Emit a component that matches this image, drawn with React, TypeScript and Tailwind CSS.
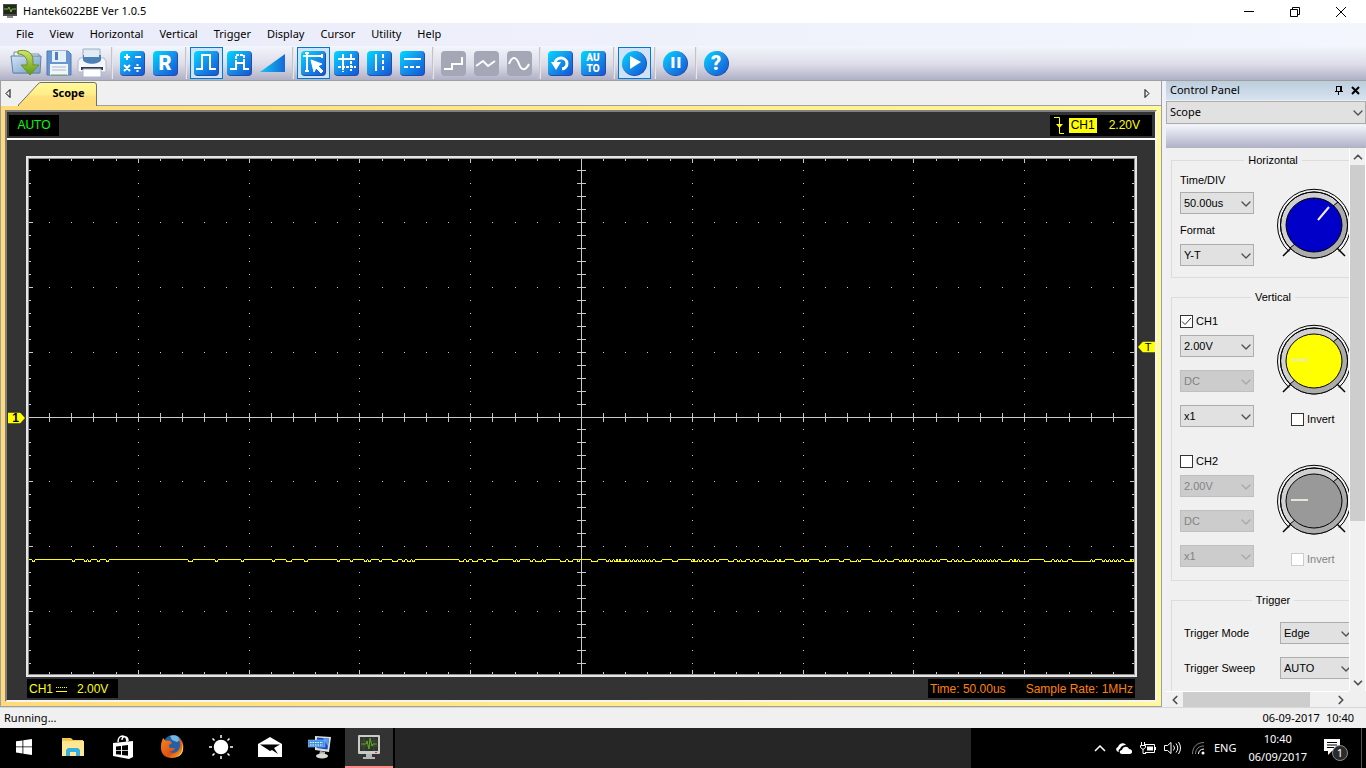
import React from 'react';
import { ChevronDown, ChevronLeft, ChevronRight, ChevronUp } from 'lucide-react';

const menus = ['File', 'View', 'Horizontal', 'Vertical', 'Trigger', 'Display', 'Cursor', 'Utility', 'Help'];

// where the signal drops to the lower sample level: [x, length]
const dips: [number, number][] = [
  [4, 1], [44, 1], [56, 1], [60, 1], [69, 1], [78, 1], [160, 3], [187, 1], [213, 1], [244, 1],
  [258, 4], [276, 2], [309, 1], [322, 1], [336, 1], [340, 1], [351, 1], [364, 4], [374, 1], [379, 2],
  [384, 1], [431, 3], [438, 1], [444, 4], [455, 1], [464, 4], [485, 1], [489, 1], [502, 1], [507, 5],
  [515, 1], [532, 4], [540, 3], [549, 1], [563, 5], [578, 1], [582, 1], [586, 1], [589, 1], [592, 4],
  [598, 1], [602, 1], [606, 1], [610, 1], [614, 1], [618, 1], [622, 1], [627, 5], [644, 4], [663, 1],
  [666, 2], [671, 1], [676, 1], [681, 3], [688, 1], [700, 4], [709, 1], [713, 3], [722, 1], [727, 2],
  [735, 1], [739, 6], [749, 1], [752, 3], [766, 5], [775, 1], [778, 1], [791, 4], [798, 1], [811, 3],
  [822, 5], [830, 1], [844, 5], [852, 3], [859, 5], [871, 1], [875, 1], [878, 1], [882, 2], [889, 1],
  [893, 1], [897, 3], [904, 2], [909, 1], [919, 3], [926, 1], [930, 2], [936, 6], [947, 1], [951, 1],
  [955, 1], [959, 1], [963, 1], [967, 1], [973, 7], [984, 1], [987, 1], [991, 8], [1016, 6], [1026, 1],
  [1030, 1], [1034, 4], [1044, 17], [1064, 1], [1074, 1], [1078, 1], [1082, 1], [1086, 1], [1090, 1],
  [1096, 5], [1103, 1],
];

const trace =
  'M0 400.5' + dips.map(([x, n]) => `L${x - 1.5} 400.5L${x} 402.5L${x + n} 402.5L${x + n + 1.5} 400.5`).join('') + 'L1105 400.5';

function Graticule() {
  const cx = 552;
  const cy = 258;
  const xs: number[] = [];
  const ys: number[] = [];
  for (let i = -24; i <= 24; i++) xs.push(i);
  for (let i = -19; i <= 19; i++) ys.push(i);
  const px = (i: number) => Math.round(cx + i * 22.16);
  const py = (i: number) => Math.floor(cy + i * 12.95);

  return (
    <svg viewBox="0 0 1105 515" preserveAspectRatio="none" className="block size-full" shapeRendering="crispEdges">
      <g fill="#c8c8c8">
        <rect x={cx} y="0" width="1" height="515" />
        <rect x="0" y={cy} width="1105" height="1" />
        {xs.map((i) => (
          <React.Fragment key={i}>
            <rect x={px(i)} y={cy - 4} width="1" height="9" />
            <rect x={px(i)} y="0" width="1" height={i % 5 ? 2 : 4} />
            <rect x={px(i)} y={i % 5 ? 513 : 511} width="1" height="4" />
          </React.Fragment>
        ))}
        {ys.map((i) => (
          <React.Fragment key={i}>
            <rect x={cx - 4} y={py(i)} width="9" height="1" />
            <rect x="0" y={py(i)} width={i % 5 ? 2 : 4} height="1" />
            <rect x={i % 5 ? 1103 : 1101} y={py(i)} width="4" height="1" />
          </React.Fragment>
        ))}
        {[-15, -10, -5, 5, 10, 15].map((r) => xs.map((i) => <rect key={`${r}:${i}`} x={px(i)} y={py(r)} width="1" height="1" />))}
        {[-20, -15, -10, -5, 5, 10, 15, 20].map((c) => ys.map((i) => <rect key={`${c}:${i}`} x={px(c)} y={py(i)} width="1" height="1" />))}
      </g>
      <path d={trace} fill="none" stroke="#ffff00" />
    </svg>
  );
}

function ToolButton({ label, active, children }: { label: string; active?: boolean; children: React.ReactNode }) {
  return (
    <button
      aria-label={label}
      className={`flex h-8 w-[33px] shrink-0 items-center justify-center border ${active ? 'border-[#0078d7] bg-[#cfe3f6]' : 'border-transparent'}`}
    >
      {children}
    </button>
  );
}

function Tile({ children, off, round }: { children: React.ReactNode; off?: boolean; round?: boolean }) {
  return (
    <span
      className={`flex size-[25px] items-center justify-center text-white ${round ? 'rounded-full' : 'rounded'} ${
        off ? 'bg-[#a3a7b6]' : 'border-r border-b border-[#2d4a9e] bg-linear-to-br from-[#00dcff] via-[#1690ea] to-[#1456d8]'
      }`}
    >
      {children}
    </span>
  );
}

function Glyph({ d, width = 2, dash, gaps = '4 2' }: { d: string; width?: number; dash?: string; gaps?: string }) {
  return (
    <svg viewBox="0 0 25 25" className="size-[25px] shrink-0" fill="none" stroke="currentColor" strokeWidth={width}>
      <path d={d} />
      {dash && <path d={dash} strokeDasharray={gaps} />}
    </svg>
  );
}

function Separator() {
  return <span className="mx-[3px] h-8 w-0.5 shrink-0 border-r border-white/60 bg-[#c4c4c8]" />;
}

function Toolbar() {
  return (
    <div className="flex h-[34px] shrink-0 items-center bg-linear-to-b from-[#f3f6fc] via-[#dcdce8] via-55% to-[#b0b0c6] pl-[9px]">
      <ToolButton label="Open">
        <svg viewBox="0 0 32 28" className="h-7 w-8 shrink-0">
          <defs>
            <linearGradient id="folder" x1="0" y1="0" x2="1" y2="1">
              <stop offset="0" stopColor="#d5e4f5" />
              <stop offset="1" stopColor="#6f9ccb" />
            </linearGradient>
            <linearGradient id="arrow" x1="0" y1="0" x2="0" y2="1">
              <stop offset="0" stopColor="#d3e66a" />
              <stop offset="1" stopColor="#5f9a10" />
            </linearGradient>
          </defs>
          <path d="M4 3h9l2 2h14v19H4z" fill="#e8eef2" stroke="#7f949f" />
          <path d="M1 7h30l-1 17H3z" fill="url(#folder)" stroke="#5d83a8" />
          <path d="M8 2c8-2 14 1 15 8v6h6l-9 10-9-10h6c1-7-3-11-9-11z" fill="url(#arrow)" stroke="#6f8d2a" />
        </svg>
      </ToolButton>
      <ToolButton label="Save">
        <svg viewBox="0 0 26 26" className="size-[26px] shrink-0">
          <path d="M1 1h21l3 3v21H1z" fill="#6796d1" stroke="#5079b5" />
          <path d="M6 1h14v11H6z" fill="#e6f0fa" />
          <path d="M9 2h3v8H9z" fill="#4f7fc0" />
          <path d="M4 14h18v11H4z" fill="#f2f6fa" />
          <path d="M6 17h14M6 20h14" stroke="#a9b8c9" />
          <path d="M5 25h16" stroke="#75a552" />
        </svg>
      </ToolButton>
      <ToolButton label="Print">
        <svg viewBox="0 0 30 30" className="size-[30px] shrink-0">
          <path d="M6 1h17v10H6z" fill="#dde7f2" stroke="#a0b0c5" />
          <path d="M3 10h24l2 3v11H1V13z" fill="#f4f6f9" stroke="#b3bac8" />
          <path d="M6 7h18v5c-2 5-16 5-18 0z" fill="#4e80b8" />
          <path d="M7 3h15v6H7z" fill="#e3ebf4" />
          <path d="M4 19h22v3H4z" fill="#2e3848" />
          <path d="M6 21h18v8H6z" fill="#fff" stroke="#a8b7cc" />
        </svg>
      </ToolButton>
      <Separator />
      <ToolButton label="Math">
        <Tile><Glyph d="M4 7h6M7 4v6M15 7h6M4 15l6 6M10 15l-6 6M14 18h7M17.5 14v2M17.5 20v2" /></Tile>
      </ToolButton>
      <ToolButton label="Reference">
        <Tile><span className="font-[Roboto] text-xl leading-6 font-black">R</span></Tile>
      </ToolButton>
      <Separator />
      <ToolButton label="Square wave" active>
        <Tile><Glyph d="M2 19h6V5h8v14h6" /></Tile>
      </ToolButton>
      <ToolButton label="Burst">
        <Tile><Glyph d="M3 19h6v-6h8v6h5" dash="M9 13V5h8v8" gaps="3 1" /></Tile>
      </ToolButton>
      <ToolButton label="Ramp">
        <svg viewBox="0 0 26 20" className="w-[26px] shrink-0">
          <defs>
            <linearGradient id="ramp">
              <stop offset="0" stopColor="#12c8f4" />
              <stop offset="1" stopColor="#1668d8" />
            </linearGradient>
          </defs>
          <path d="M0 19 25 1v18z" fill="url(#ramp)" />
        </svg>
      </ToolButton>
      <Separator />
      <ToolButton label="Cursor" active>
        <Tile>
          <svg viewBox="0 0 25 25" className="size-[25px] shrink-0" fill="none" stroke="#fff" strokeWidth="2">
            <path d="M6 2v20M2 6h20M4 3h4M4 21h4M21 4v4" />
            <path d="M10 10l11 4-4 2 5 5-2 2-5-5-2 4z" fill="#fff" strokeWidth="1" />
          </svg>
        </Tile>
      </ToolButton>
      <ToolButton label="Cross cursor">
        <Tile><Glyph d="M9 4v13M4 9h17M17 4v6" dash="M17 11v10M4 17h18M9 17v5" gaps="3 1" /></Tile>
      </ToolButton>
      <ToolButton label="Vertical cursor">
        <Tile><Glyph d="M9 4v17" dash="M16 4v17" /></Tile>
      </ToolButton>
      <ToolButton label="Horizontal cursor">
        <Tile><Glyph d="M4 9h17" dash="M4 17h18" /></Tile>
      </ToolButton>
      <Separator />
      <ToolButton label="Step">
        <Tile off><Glyph d="M3 18h8v-5h10V6" /></Tile>
      </ToolButton>
      <ToolButton label="Linear">
        <Tile off><Glyph d="M2 15l7-5 5 5 7-5" /></Tile>
      </ToolButton>
      <ToolButton label="Sine">
        <Tile off><Glyph d="M2 13c3-8 7-8 10 0s7 6 10 0" /></Tile>
      </ToolButton>
      <Separator />
      <ToolButton label="Reset">
        <Tile>
          <svg viewBox="0 0 25 25" className="size-[25px] shrink-0">
            <path d="M7 13a6 5.500 0 1 1 7 6" fill="none" stroke="#fff" strokeWidth="3" />
            <path d="M3 12h10l-5 8z" fill="#fff" />
          </svg>
        </Tile>
      </ToolButton>
      <ToolButton label="Auto set">
        <Tile>
          <span className="flex flex-col font-[Roboto] text-[10px] leading-[11px] font-black">
            <span>AU</span>
            <span>TO</span>
          </span>
        </Tile>
      </ToolButton>
      <Separator />
      <ToolButton label="Start" active>
        <Tile round>
          <svg viewBox="0 0 25 25" className="size-[25px] shrink-0" fill="#fff"><path d="M8 6l11 6-11 7z" /></svg>
        </Tile>
      </ToolButton>
      <Separator />
      <ToolButton label="Pause">
        <Tile round><Glyph d="M10 7v11M16 7v11" width={3} /></Tile>
      </ToolButton>
      <Separator />
      <ToolButton label="Help">
        <Tile round><span className="font-[Roboto] text-xl leading-6 font-black">?</span></Tile>
      </ToolButton>
    </div>
  );
}

function Dropdown({ id, label, value, disabled }: { id: string; label?: string; value: string; disabled?: boolean }) {
  return (
    <div className="relative h-[22px] w-[74px] shrink-0">
      <select
        id={id}
        aria-label={label}
        disabled={disabled}
        defaultValue={value}
        className="size-full appearance-none border border-[#adadad] bg-[#e1e1e1] pl-[3px] text-[11px] text-black opacity-100 disabled:border-[#bfbfbf] disabled:bg-[#cccccc] disabled:text-[#838383]"
      >
        <option>{value}</option>
      </select>
      <ChevronDown className={`pointer-events-none absolute top-1 right-0 size-4 ${disabled ? 'text-[#a8a8a8]' : 'text-[#505050]'}`} strokeWidth={2} />
    </div>
  );
}

function Check({ label, checked, disabled }: { label: string; checked?: boolean; disabled?: boolean }) {
  return (
    <label className={`relative flex h-3.5 items-center gap-[3px] ${disabled ? 'text-[#838383]' : ''}`}>
      <input
        type="checkbox"
        defaultChecked={checked}
        disabled={disabled}
        className="peer size-[13px] appearance-none border border-[#333] bg-white disabled:border-[#ccc]"
      />
      <svg viewBox="0 0 13 13" className="pointer-events-none invisible absolute left-0 size-[13px] peer-checked:visible" fill="none" stroke="#333">
        <path d="M2 6.500l3 3 6-6.500" />
      </svg>
      {label}
    </label>
  );
}

function Knob({ fill, pointer, stroke = '#e6e6d2' }: { fill: string; pointer: string; stroke?: string }) {
  return (
    <svg viewBox="0 0 74 74" className="size-[74px] shrink-0" fill="none" stroke="#000">
      <path d="M12 63.500A36.500 36 0 1 1 62 63.500" fill="#f0f0f0" />
      <ellipse cx="37" cy="37" rx="33.500" ry="33" fill="#d0d0d0" />
      <path d="M60.500 13.500A33 33 0 0 1 13.500 60.500z" fill="#acacac" stroke="none" />
      <ellipse cx="37" cy="37" rx="33.500" ry="33" />
      <ellipse cx="37" cy="37" rx="28" ry="27" fill={fill} />
      <path d="M61 14l-5 4M18 56l-5 4" />
      <path d="M14 60l-8 8M60 60l8 8" strokeWidth="1.5" />
      <path d={pointer} stroke={stroke} strokeWidth="2" />
    </svg>
  );
}

function Channel({ name, on, fill }: { name: string; on?: boolean; fill: string }) {
  return (
    <div className="flex gap-[23px] pl-2">
      <div className="flex w-[74px] flex-col gap-[13px]">
        <div className="flex flex-col gap-[7px]">
          <Check label={name} checked={on} />
          <Dropdown id={`${name}-volt`} label={`${name} volts`} value="2.00V" disabled={!on} />
        </div>
        <Dropdown id={`${name}-coupling`} label={`${name} coupling`} value="DC" disabled />
        <Dropdown id={`${name}-probe`} label={`${name} probe`} value="x1" disabled={!on} />
      </div>
      <div className="pt-2.5">
        <Knob fill={fill} pointer="M14 36h17" />
        <div className="mt-3.5 pl-3.5">
          <Check label="Invert" disabled={!on} />
        </div>
      </div>
    </div>
  );
}

function Group({ title, children }: { title: string; children: React.ReactNode }) {
  return (
    <fieldset className="w-[204px] shrink-0 border border-[#dcdcdc]">
      <legend className="mx-auto px-1 leading-3.5">{title}</legend>
      {children}
    </fieldset>
  );
}

function ControlPanel() {
  return (
    <aside className="flex w-[200px] shrink-0 flex-col">
      <div className="flex h-[19px] shrink-0 items-center bg-linear-to-b from-[#bccddc] to-[#d6e2f0] pl-1">
        <h2 className="flex-1">Control Panel</h2>
        <button aria-label="Pin" className="mr-2">
          <svg viewBox="0 0 9 9" className="size-[9px]" fill="none" stroke="#000" shapeRendering="crispEdges">
            <path d="M2.500 0v5M2 .5h5M6 0v5M7 0v5M.5 5.500h8M4.500 5v4" />
          </svg>
        </button>
        <button aria-label="Close panel" className="mr-1.5">
          <svg viewBox="0 0 9 9" className="size-[9px]" fill="none" stroke="#000" strokeWidth="2"><path d="M1 1l7 7M8 1l-7 7" /></svg>
        </button>
      </div>
      <div className="relative mt-px h-6 shrink-0">
        <select aria-label="Panel" className="h-[23px] w-full appearance-none border border-[#adadad] bg-[#e1e1e1] pl-[3px] text-[11px] text-black">
          <option>Scope</option>
        </select>
        <ChevronDown className="pointer-events-none absolute top-1 right-0 size-4 text-[#505050]" />
      </div>
      <div className="h-[23px] shrink-0 bg-linear-to-b from-[#f3f6fc] to-[#b0b0c6]" />
      <div className="flex min-h-0 flex-1">
        <div className="flex min-w-0 flex-1 flex-col">
          <div className="flex min-h-0 flex-1 flex-col gap-3 overflow-hidden pt-[5px] pl-[5px] font-['Liberation_Sans',Arial,sans-serif] text-[11px]">
            <Group title="Horizontal">
              <div className="flex gap-[23px] pb-[11px] pl-2">
                <div className="w-[74px] pt-[5px]">
                  <label htmlFor="timediv" className="mb-1 block leading-4">Time/DIV</label>
                  <Dropdown id="timediv" value="50.00us" />
                  <label htmlFor="format" className="mt-2 mb-1.5 block leading-4">Format</label>
                  <Dropdown id="format" value="Y-T" />
                </div>
                <div className="pt-[21px]">
                  <Knob fill="#0000c8" pointer="M41 32l11-13" stroke="#f0f0f0" />
                </div>
              </div>
            </Group>
            <Group title="Vertical">
              <div className="flex flex-col gap-[27px] pt-2.5 pb-[13px]">
                <Channel name="CH1" on fill="#ffff00" />
                <Channel name="CH2" fill="#999999" />
              </div>
            </Group>
            <Group title="Trigger">
              <div className="flex flex-col gap-[13px] pt-[15px] pb-6 pl-3">
                <div className="flex items-center">
                  <label htmlFor="mode" className="w-24 shrink-0">Trigger Mode</label>
                  <Dropdown id="mode" value="Edge" />
                </div>
                <div className="flex items-center">
                  <label htmlFor="sweep" className="w-24 shrink-0">Trigger Sweep</label>
                  <Dropdown id="sweep" value="AUTO" />
                </div>
              </div>
            </Group>
          </div>
          <div className="flex h-4 shrink-0 items-stretch border-t border-white text-[#505050]">
            <button aria-label="Scroll left" className="w-[17px]"><ChevronLeft className="mx-auto size-3.5" strokeWidth={3} /></button>
            <div className="flex-1"><div className="h-full w-[85%] bg-[#cdcdcd]" /></div>
            <button aria-label="Scroll right" className="w-[17px]"><ChevronRight className="mx-auto size-3.5" strokeWidth={3} /></button>
          </div>
        </div>
        <div className="mb-4 flex w-[17px] shrink-0 flex-col border-x border-white text-[#505050]">
          <button aria-label="Scroll up" className="h-[17px]"><ChevronUp className="mx-auto size-3.5" strokeWidth={3} /></button>
          <div className="flex-1"><div className="h-[70%] bg-[#cdcdcd]" /></div>
          <button aria-label="Scroll down" className="h-[17px]"><ChevronDown className="mx-auto size-3.5" strokeWidth={3} /></button>
        </div>
      </div>
    </aside>
  );
}

// flag with the channel or trigger letter, placed by its level on the screen
function LevelMarker({ level, text, left }: { level: number; text: string; left?: boolean }) {
  return (
    <div className="relative">
      <div className="absolute inset-x-0 flex h-[11px] -translate-y-1/2 items-center justify-center" style={{ top: `${level}%` }}>
        <svg viewBox="0 0 17 11" className="absolute h-[11px] w-[17px]" fill="#ffff00">
          <path d={left ? 'M17 0H5L0 5.500 5 11h12z' : 'M0 0h12l5 5.500L12 11H0z'} />
        </svg>
        <span className={`relative leading-[11px] text-black ${left ? 'pl-1 text-[11px]' : 'pr-0.5 text-xs font-bold'}`}>{text}</span>
      </div>
    </div>
  );
}

function Scope() {
  return (
    <main className="flex min-w-0 flex-1 flex-col border-x border-[#a0a0a0]">
      <div className="flex h-[25px] shrink-0 items-stretch bg-[#f0f0f0]">
        <button aria-label="Previous tab" className="w-[17px] pr-1">
          <svg viewBox="0 0 6 9" className="mx-auto h-[9px] w-1.5" fill="none" stroke="#000"><path d="M5 .5v8l-4-4z" /></svg>
        </button>
        <button className="relative h-[25px] w-[79px] font-bold">
          <svg viewBox="0 0 79 25" className="absolute inset-0 size-full">
            <defs>
              <linearGradient id="tab" x1="0" y1="0" x2="0" y2="1">
                <stop offset="0" stopColor="#fffa98" />
                <stop offset=".5" stopColor="#ffee88" />
                <stop offset=".6" stopColor="#ffdf7c" />
                <stop offset="1" stopColor="#ffdb78" />
              </linearGradient>
            </defs>
            <path d="M0 24.500 20 3q1-1.500 3-1.500h53q2.500 0 2.500 2.500v21z" fill="url(#tab)" stroke="#707070" />
            <path d="M1 24.500h77" stroke="#ffdb78" />
          </svg>
          <span className="relative pl-[22px]">Scope</span>
        </button>
        <div className="flex flex-1 items-center justify-end border-b border-[#a0a0a0] pr-[11px]">
          <button aria-label="Next tab">
            <svg viewBox="0 0 6 9" className="h-[9px] w-1.5" fill="none" stroke="#000"><path d="M1 .5v8l4-4z" /></svg>
          </button>
        </div>
      </div>
      <div className="flex min-h-0 flex-1 flex-col border-b border-[#a0a0a0] bg-linear-to-r from-[#ffdb78] to-[#fff99a] p-1">
        <div className="flex min-h-0 flex-1 flex-col border-2 border-t-[#808080] border-r-[#f4f4f4] border-b-[#f4f4f4] border-l-[#808080] bg-[#333] font-['Liberation_Sans',Arial,sans-serif] text-xs">
          <div className="flex h-7 shrink-0 items-center justify-between border-b-2 border-white pr-[3px] pl-0.5">
            <div className="flex h-[21px] w-[50px] items-center justify-center bg-black text-[#00ff00]">AUTO</div>
            <div className="flex h-[21px] items-center bg-black pr-3 pl-1 text-[#ffff00]">
              <svg viewBox="0 0 11 17" className="mr-1 h-[17px] w-[11px]" fill="none" stroke="#ffff00">
                <path d="M0 .5h5.500v16H10" />
                <path d="M2 7h7L5.500 11z" fill="#ffff00" stroke="none" />
              </svg>
              <span className="bg-[#ffff00] px-0.5 leading-[15px] text-black">CH1</span>
              <span className="ml-3">2.20V</span>
            </div>
          </div>
          <div className="grid min-h-0 flex-1 grid-cols-[19px_1fr_18px] pt-4">
            <LevelMarker level={50.2} text="1" />
            <div className="min-h-0 border-2 border-[#e6e6e6] bg-black">
              <div className="size-full border border-[#909090]"><Graticule /></div>
            </div>
            <LevelMarker level={36.6} text="T" left />
          </div>
          <div className="my-0.5 flex h-[19px] shrink-0 items-center justify-between px-5">
            <div className="flex h-full items-center bg-black pr-2.5 pl-0.5 text-[#ffff00]">
              <span>CH1</span>
              <svg viewBox="0 0 11 6" className="mr-2.5 ml-[3px] h-1.5 w-[11px]" stroke="#ffff00" shapeRendering="crispEdges">
                <path d="M0 1.500h11" strokeDasharray="1 1" />
                <path d="M0 5.500h11" />
              </svg>
              <span>2.00V</span>
            </div>
            <div className="flex h-full items-center gap-5 bg-black px-0.5 text-[#ff8000]">
              <span>Time: 50.00us</span>
              <span>Sample Rate: 1MHz</span>
            </div>
          </div>
        </div>
      </div>
    </main>
  );
}

function Monitor({ className }: { className: string }) {
  return (
    <svg viewBox="0 0 22 24" className={className}>
      <rect x="0" y="0" width="22" height="19" rx="1" fill="#c9ccc6" />
      <rect x="2" y="2" width="18" height="14" fill="#30352c" />
      <path d="M2 6h18M2 11h18M6 2v14M16 2v14" stroke="#555d50" strokeWidth=".5" />
      <path d="M3 9h5l1-3 2 8 1-11 2 8 1-2h4" fill="none" stroke="#5fae1e" />
      <path d="M8 19h6v3h3v2H5v-2h3z" fill="#b4b7b1" />
      <path d="M17 17.500h2" stroke="#e03030" />
    </svg>
  );
}

function Task({ label, active, children }: { label: string; active?: boolean; children: React.ReactNode }) {
  return (
    <button
      aria-label={label}
      className={`flex h-10 w-12 shrink-0 items-center justify-center border-b-2 ${active ? 'border-[#ff8a8a] bg-[#333]' : 'border-transparent'}`}
    >
      {children}
    </button>
  );
}

function Taskbar() {
  return (
    <footer className="flex h-10 shrink-0 bg-black text-white">
      <div className="flex w-[393px] shrink-0 justify-between">
        <Task label="Start menu">
          <svg viewBox="0 0 16 16" className="size-4" fill="#fff">
            <path d="M0 2.300 6.500 1.400v6.100H0zM7.300 1.300 16 0v7.500H7.300zM0 8.300h6.500v6.200L0 13.600zM7.300 8.300H16V16l-8.700-1.300z" />
          </svg>
        </Task>
        <Task label="File Explorer">
          <svg viewBox="0 0 22 18" className="h-[18px] w-[22px]">
            <path d="M0 0h9l2 2h10v16H0z" fill="#f5c84b" />
            <path d="M0 3h22v15H0z" fill="#ffe793" />
            <path d="M4 18v-6l2-2h10l2 2v6h-4v-4H8v4z" fill="#35aee2" />
          </svg>
        </Task>
        <Task label="Store">
          <svg viewBox="0 0 22 24" className="h-6 w-[22px]">
            <path d="M6 7c0-8 9-8 9 0M10 5c0-5 6-4 6 1" fill="none" stroke="#fff" strokeWidth="1.500" />
            <path d="M1 8l20-2v16l-4 2-16-3z" fill="#fff" />
            <path d="M4 11.500l5-.6v4H4zM10 10.800l6-.7v4.800h-6zM4 15.800h5v4l-5-.6zM10 15.800h6v4.900l-6-.7z" fill="#000" />
          </svg>
        </Task>
        <Task label="Firefox">
          <svg viewBox="0 0 24 24" className="size-6">
            <defs>
              <linearGradient id="fox" x1="0" y1="0" x2="1" y2="1">
                <stop offset="0" stopColor="#f08a1d" />
                <stop offset=".6" stopColor="#df4f12" />
                <stop offset="1" stopColor="#ffc62e" />
              </linearGradient>
            </defs>
            <circle cx="13" cy="10" r="10" fill="#2460a8" />
            <path d="M10 1c5-2 9 0 10 4l-3 2-5-2z" fill="#6fb8e4" />
            <path d="M2 6l1-3 3 3c3-1 5 0 6 2l-3 2c0 2 0 3 2 3h4c-1 3-4 4-6 3 3 4 11 2 11-6 0-3-1-5-2-7 5 3 6 7 5 12-1 5-6 8-11 8C5 23 1 19 1 13c0-3 0-5 1-7z" fill="url(#fox)" />
            <path d="M20 5c4 6 3 14-4 17 8-1 9-11 4-17z" fill="#ffdc50" />
          </svg>
        </Task>
        <Task label="Brightness">
          <svg viewBox="0 0 24 24" className="size-6" stroke="#fff" strokeWidth="1.500">
            <circle cx="12" cy="12" r="6.500" fill="#fff" />
            <path d="M12 0v3M12 21v3M0 12h3M21 12h3M3.500 3.500l2 2M18.500 18.500l2 2M3.500 20.500l2-2M18.500 5.500l2-2" />
          </svg>
        </Task>
        <Task label="Mail">
          <svg viewBox="0 0 24 20" className="h-5 w-6">
            <path d="M0 7 12 0l12 7v13H0z" fill="#fff" />
            <path d="M2 7.500h20L16 11l4 6-6-4-2 1z" fill="#000" />
          </svg>
        </Task>
        <Task label="Remote keyboard">
          <svg viewBox="0 0 24 24" className="size-6">
            <path d="M7 1l16 1-2 15-14-2z" fill="#e2e2dc" />
            <path d="M9 2.500l12 1-1.500 11L8.500 13z" fill="#1845c8" />
            <path d="M15 3l6 .5-1 8z" fill="#5c9bf0" />
            <path d="M12 16l5 1v3H11z" fill="#b0b0a8" />
            <ellipse cx="14" cy="21" rx="6" ry="2.500" fill="#dadad4" />
            <rect x="0" y="5" width="17" height="7" fill="#3d93e0" stroke="#a8d2f5" strokeWidth=".5" />
            <path d="M2 7.500h13M2 10h13" stroke="#fff" strokeDasharray="1.500 1" />
          </svg>
        </Task>
        <Task label="Hantek6022BE" active>
          <Monitor className="h-6 w-[22px]" />
        </Task>
      </div>
      <div className="ml-0.5 w-[42.2%] bg-[#262626]" />
      <div className="ml-auto flex items-center">
        <button aria-label="Show hidden icons">
          <svg viewBox="0 0 12 7" className="h-[7px] w-3" fill="none" stroke="#fff" strokeWidth="1.500"><path d="M1 6l5-5 5 5" /></svg>
        </button>
        <svg viewBox="0 0 16 11" className="ml-2.5 h-[11px] w-4" fill="#fff">
          <path d="M3 9C0 9-1 5 2 4c1-4 6-5 8-2-3 0-5 1-6 4-1 0-2 2-1 3z" />
          <path d="M6 11c-3 0-3-4 0-4 1-4 6-4 7-1 4 0 4 5 1 5z" />
        </svg>
        <svg viewBox="0 0 16 12" className="ml-2 h-3 w-4" fill="none" stroke="#fff">
          <path d="M5 2.500h9.500v8H5M15.500 5v3M1.500 0v3M4.500 0v3M.5 3.500h5v2l-2 1.500h-1l-2-1.500zM3 7v4.500h3" />
          <path d="M7 4.500h6v4H7z" fill="#fff" stroke="none" />
        </svg>
        <svg viewBox="0 0 17 14" className="ml-2 h-3.5 w-[17px]" fill="none" stroke="#fff">
          <path d="M.5 4.500h3L7 1.500v11L3.500 9.500h-3zM9.500 4.500q2 2.500 0 5M12 2.500q3.500 4.500 0 9M14.500 1q4 6 0 12" />
        </svg>
        <svg viewBox="0 0 14 14" className="ml-2.5 size-3.5" fill="none" stroke="#fff">
          <path d="M1.500 13C1.500 6 6 1.500 13 1.500M4.500 13c0-5 3.500-8 8.500-8" opacity=".5" />
          <path d="M7.500 13c0-3 2-5 5.500-5" />
          <circle cx="12" cy="12" r="1.500" fill="#fff" stroke="none" />
        </svg>
        <span className="ml-[9px]">ENG</span>
        <div className="ml-3 text-center leading-[18px]">
          <div>10:40</div>
          <div>06/09/2017</div>
        </div>
        <button aria-label="Notifications" className="mr-3 ml-[17px]">
          <svg viewBox="0 0 25 25" className="size-[25px]">
            <path d="M0 3h16v12H8l-4 4v-4H0z" fill="#fff" />
            <path d="M3 6.500h10M3 9h10M3 11.500h7" stroke="#000" />
            <circle cx="16" cy="17" r="7.500" fill="#2b2b2b" stroke="#8a8a8a" />
            <text x="16" y="21" textAnchor="middle" fill="#fff" fontSize="11">1</text>
          </svg>
        </button>
        <div className="mr-1 h-full w-px bg-[#555]" />
      </div>
    </footer>
  );
}

export default function App() {
  return (
    <div className="flex h-screen flex-col overflow-hidden bg-[#f0f0f0] font-['Noto_Sans','Open_Sans',sans-serif] text-[11px] text-black">
      <header className="flex h-[23px] shrink-0 items-center bg-white pl-[3px]">
        <svg viewBox="0 0 14 15" className="h-[15px] w-3.5">
          <path d="M0 0h14v12H0z" fill="#4a4d48" />
          <path d="M1 1h12v9H1z" fill="#22281e" />
          <path d="M1 5h4l1-2 2 5 1-3h4" fill="none" stroke="#79b83c" />
          <path d="M4 12h6v2H4z" fill="#8b8b8b" />
        </svg>
        <h1 className="ml-1.5 flex-1">Hantek6022BE Ver 1.0.5</h1>
        <div className="flex items-center gap-9 pr-5">
          <button aria-label="Minimize"><svg viewBox="0 0 10 10" className="size-2.5" stroke="#000"><path d="M0 4.500h10" /></svg></button>
          <button aria-label="Restore">
            <svg viewBox="0 0 10 10" className="size-2.5" fill="none" stroke="#000"><path d="M.5 2.500h7v7h-7zM2.500 2.500v-2h7v7h-2" /></svg>
          </button>
          <button aria-label="Close"><svg viewBox="0 0 10 10" className="size-2.5" stroke="#000"><path d="M0 0l10 10M10 0L0 10" /></svg></button>
        </div>
      </header>
      <nav className="flex h-[23px] shrink-0 items-center gap-4 bg-linear-to-r from-[#eaebf9] to-[#f3f6fd] pl-4">
        {menus.map((m) => (
          <button key={m}>{m}</button>
        ))}
      </nav>
      <Toolbar />
      <div className="flex min-h-0 flex-1 gap-1 border-t border-b border-t-[#a0a0a0] border-b-[#d7d7d7] bg-[#f0f0f8]">
        <Scope />
        <div className="flex bg-[#f0f0f0]">
          <ControlPanel />
        </div>
      </div>
      <div className="flex h-5 shrink-0 items-center justify-between px-1">
        <span>Running...</span>
        <span className="flex gap-1.5 pr-2">
          <span>06-09-2017</span>
          <span>10:40</span>
        </span>
      </div>
      <Taskbar />
    </div>
  );
}
